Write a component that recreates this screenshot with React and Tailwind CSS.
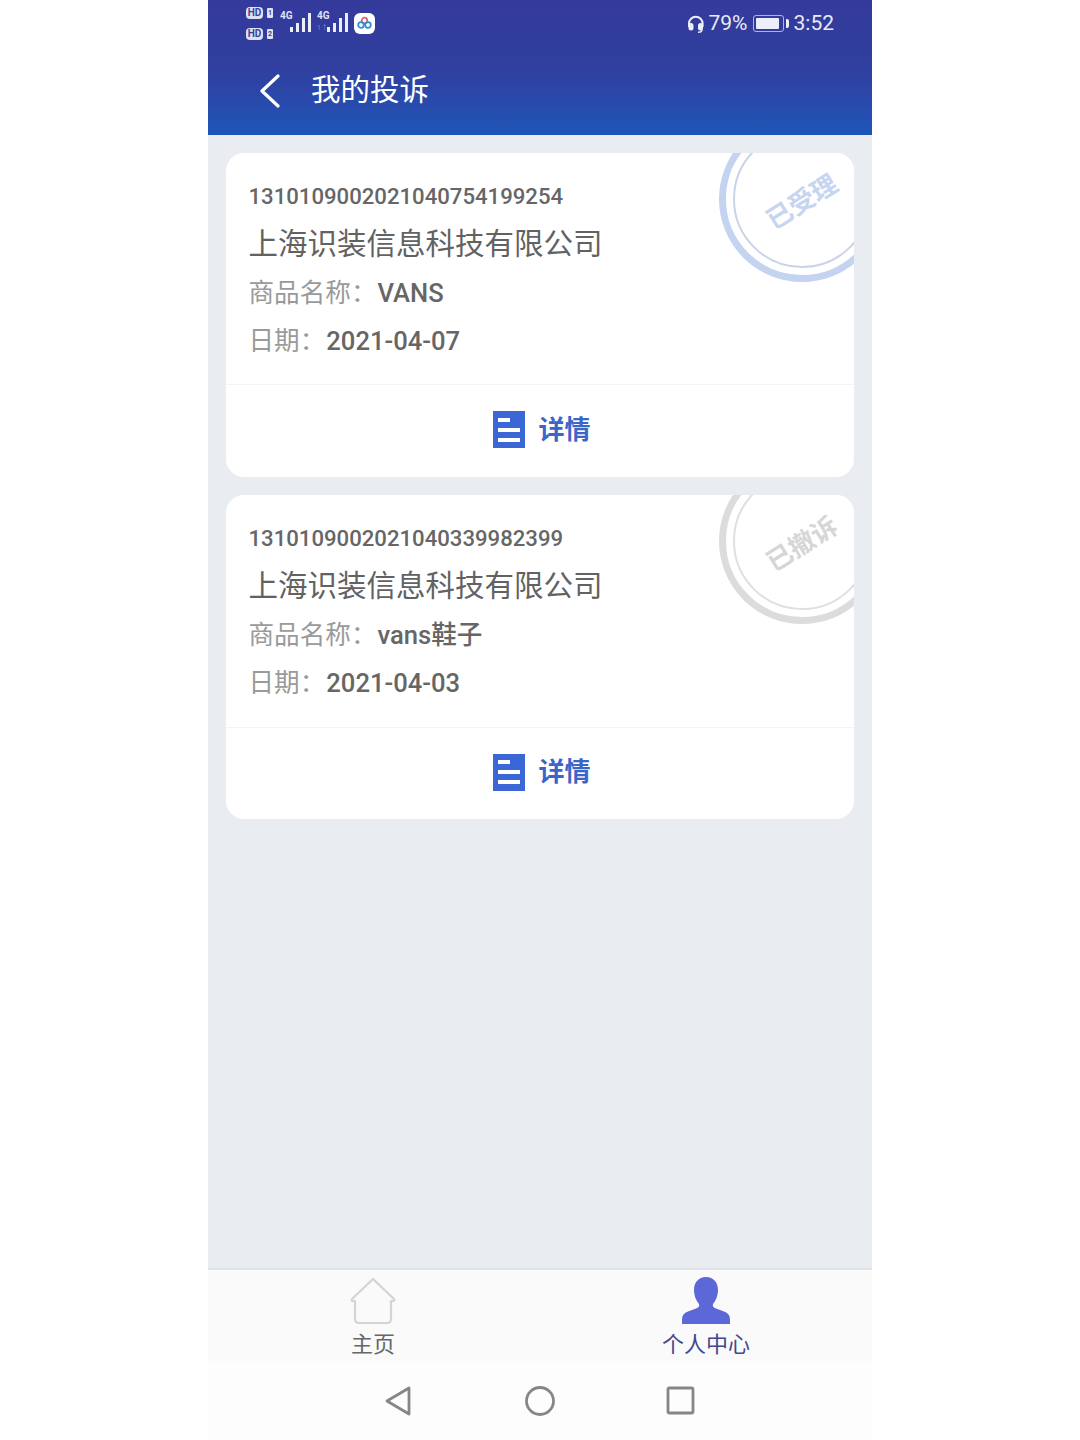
const complaints = [
  { id: "1310109002021040754199254", product: "VANS", date: "2021-04-07", status: "已受理", top: "h-[232px]", ring: "border-[#c4d3f0]", thin: "border-[#c9d4e6]", text: "text-[#c6d5f0]" },
  { id: "1310109002021040339982399", product: "vans鞋子", date: "2021-04-03", status: "已撤诉", top: "h-[233px]", ring: "border-[#dcdcdc]", thin: "border-[#dfdfdf]", text: "text-[#d6d6d6]" },
];

function Signal({ second }) {
  return (
    <div className="relative w-[32px] h-[24px]">
      <span className="absolute left-0 top-[-1px] text-[10px] leading-[12px] font-bold text-[#dfe2f3]">4G</span>
      {second && <span className="absolute left-0 top-[13px] text-[7px] leading-[9px] text-[#7d86c8]">1↑</span>}
      <svg className="absolute left-[10px] top-[2px]" width="22" height="20" viewBox="0 0 22 20" fill="#eceef8">
        <rect x="0" y="14" width="3" height="5" />
        <rect x="6" y="10" width="3" height="9" />
        <rect x="12" y="5" width="3" height="14" />
        <rect x="18" y="0" width="3" height="19" />
      </svg>
    </div>
  );
}

function HdRow({ n }) {
  return (
    <div className="flex items-center gap-[4px] h-[14px]">
      <span className="w-[17px] h-[12px] rounded-[4px] bg-[#dfe2f3] text-[#3a3f9c] text-[10px] leading-[12px] font-bold text-center">HD</span>
      <span className="w-[6px] h-[10px] rounded-[1px] bg-[#dfe2f3] text-[#3a3f9c] text-[7px] leading-[10px] font-bold text-center">{n}</span>
    </div>
  );
}

function StatusBar() {
  return (
    <div className="h-[46px] px-[38px] flex items-center justify-between text-[#e8eaf6]">
      <div className="flex items-center">
        <div className="flex flex-col gap-[7px] w-[34px]">
          <HdRow n="1" />
          <HdRow n="2" />
        </div>
        <div className="flex items-center gap-[5px]">
          <Signal />
          <Signal second />
        </div>
        <div className="ml-[5px] w-[21px] h-[21px] rounded-[6px] bg-white flex items-center justify-center">
          <svg width="15" height="14" viewBox="0 0 15 14" fill="none" strokeWidth="1.8">
            <circle cx="7.5" cy="4.5" r="2.8" stroke="#d9667a" />
            <circle cx="4" cy="9" r="2.8" stroke="#2f8fd0" />
            <circle cx="11" cy="9" r="2.8" stroke="#2f8fd0" />
          </svg>
        </div>
      </div>
      <div className="flex items-center text-[21px] leading-none pt-[1px]">
        <svg width="20" height="20" viewBox="0 0 20 20" fill="none" stroke="#eceef8" strokeWidth="2">
          <path d="M3 13V9.500a6.800 6.800 0 0 1 13.600 0V13" />
          <rect x="3.500" y="10" width="3" height="5.500" rx="1.500" fill="#eceef8" />
          <rect x="13" y="10" width="3" height="5.500" rx="1.500" fill="#eceef8" />
          <path d="M16 15.500c0 2-1.500 2.800-4 2.800" strokeWidth="1.500" />
        </svg>
        <span className="ml-[3px]">79%</span>
        <div className="ml-[5px] w-[31px] h-[17px] rounded-[3px] border border-[#aeb4e2] p-[2px]">
          <div className="w-[23px] h-full rounded-[1px] bg-[#eceef8]" />
        </div>
        <div className="ml-[2px] w-[3px] h-[9px] rounded-r-[2px] bg-[#eceef8]" />
        <span className="ml-[5px]">3:52</span>
      </div>
    </div>
  );
}

function Stamp({ item }) {
  return (
    <div className={`absolute left-[493px] top-[-37px] w-[166px] h-[166px] rounded-full border-[7px] bg-white flex items-center justify-center ${item.ring}`}>
      <div className={`w-[138px] h-[138px] rounded-full border-2 flex items-center justify-center ${item.thin}`}>
        <span className={`mt-[6px] rotate-[-32deg] text-[26px] leading-none font-bold ${item.text}`}>{item.status}</span>
      </div>
    </div>
  );
}

function ComplaintCard({ item }) {
  return (
    <div className="relative h-[324px] bg-white rounded-[18px] overflow-hidden flex flex-col">
      <Stamp item={item} />
      <div className={`relative pl-[22.500px] pt-[28px] border-b border-[#f2f3f5] ${item.top}`}>
        <div className="text-[22.150px] leading-[30px] font-medium text-[#666666]">{item.id}</div>
        <div className="mt-[13px] text-[29.500px] leading-[40px] text-[#626262]">上海识装信息科技有限公司</div>
        <div className="mt-[9px] text-[25.600px] leading-[40px] text-[#666666] flex">
          <span className="text-[#9a9a9a]">商品名称：</span>
          <span className="ml-[1px] font-medium">{item.product}</span>
        </div>
        <div className="mt-[8px] text-[25.600px] leading-[40px] text-[#666666] flex">
          <span className="text-[#9a9a9a]">日期：</span>
          <span className="ml-[1px] font-medium">{item.date}</span>
        </div>
      </div>
      <div className="flex-1 flex items-center justify-center gap-[13px] pb-[3px] pl-[4px]">
        <div className="w-[32px] h-[37px] bg-[#3a66d6] flex flex-col justify-center pl-[5px] gap-[6px]">
          <div className="w-[12px] h-[4px] bg-white" />
          <div className="w-[22px] h-[4px] bg-white" />
          <div className="w-[22px] h-[4px] bg-white" />
        </div>
        <span className="text-[26px] leading-none font-bold text-[#3a66c8]">详情</span>
      </div>
    </div>
  );
}

export default function App() {
  return (
    <div className="w-[1080px] h-[1440px] bg-white flex justify-center" style={{ fontFamily: 'Roboto, "Noto Sans CJK SC", sans-serif' }}>
      <div className="w-[664px] h-full flex flex-col bg-[#e9ecf1]">
        <header className="h-[135px] bg-gradient-to-b from-[#343a9b] via-[#303f9f] to-[#1c55b8]">
          <StatusBar />
          <div className="h-[89px] flex items-center pl-[51px] text-white">
            <svg width="22" height="34" viewBox="0 0 22 34" fill="none" stroke="currentColor" strokeWidth="3.200" strokeLinecap="round" strokeLinejoin="round">
              <path d="M19 2 L3 17 L19 32" />
            </svg>
            <h1 className="ml-[30px] text-[29.500px] leading-none font-normal">我的投诉</h1>
          </div>
        </header>

        <main className="flex-1 px-[18px] pt-[18px] flex flex-col gap-[18px]">
          {complaints.map((item) => (
            <ComplaintCard key={item.id} item={item} />
          ))}
        </main>

        <nav className="h-[93px] bg-[#fafafa] border-t-2 border-[#dfe2e6] grid grid-cols-2">
          <div className="flex flex-col items-center pr-[2px]">
            <svg className="mt-[7px]" width="48" height="48" viewBox="0 0 48 48" fill="none" stroke="#d2d4da" strokeWidth="2.200" strokeLinejoin="round">
              <path d="M24 2 L45 22 Q46 23 44.500 24 L42 24 V42 Q42 46 38 46 H10 Q6 46 6 42 V24 L3.500 24 Q2 23 3 22 Z" />
            </svg>
            <span className="mt-[7px] text-[22px] leading-[26px] text-[#666666]">主页</span>
          </div>
          <div className="flex flex-col items-center">
            <svg className="mt-[7px]" width="48" height="48" viewBox="0 0 48 48" fill="#5c67d8">
              <path d="M24 0c7.500 0 12 5.500 12 13 0 6-2.500 11-5 14-.800 2 .500 3.500 3 4.500l8 3c4 1.500 6 4 6 8V47H0v-4.500c0-4 2-6.500 6-8l8-3c2.500-1 3.800-2.500 3-4.500-2.500-3-5-8-5-14C12 5.500 16.500 0 24 0z" />
            </svg>
            <span className="mt-[7px] text-[22px] leading-[26px] text-[#3f4890]">个人中心</span>
          </div>
        </nav>

        <div className="h-[79px] bg-[#fdfdfd] flex items-center justify-center gap-[110px] pt-[1px]">
          <svg className="-ml-[1px]" width="32" height="32" viewBox="0 0 32 32" fill="none" stroke="#868686" strokeWidth="2.800" strokeLinejoin="round">
            <path d="M27 3 V29 L5 16 Z" />
          </svg>
          <svg width="32" height="32" viewBox="0 0 32 32" fill="none" stroke="#868686" strokeWidth="2.800">
            <circle cx="16" cy="16" r="13.500" />
          </svg>
          <svg width="32" height="32" viewBox="0 0 32 32" fill="none" stroke="#868686" strokeWidth="2.800" strokeLinejoin="round">
            <rect x="2" y="3" width="25" height="25" rx="1.500" />
          </svg>
        </div>
      </div>
    </div>
  );
}
